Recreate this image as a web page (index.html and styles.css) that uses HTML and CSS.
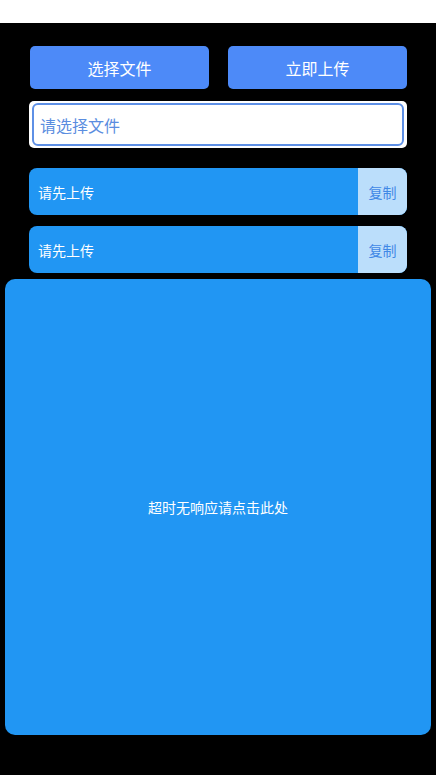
FILE: index.html
```html
<!DOCTYPE html>
<html lang="zh-CN">
<head>
<meta charset="utf-8">
<title>上传</title>
<link rel="stylesheet" href="styles.css">
</head>
<body>
<div class="topbar"></div>
<main class="page">
  <div class="actions">
    <button class="btn">选择文件</button>
    <button class="btn">立即上传</button>
  </div>
  <div class="field">
    <div class="field-inner">请选择文件</div>
  </div>
  <div class="result first">
    <span class="result-text">请先上传</span>
    <span class="copy">复制</span>
  </div>
  <div class="result second">
    <span class="result-text">请先上传</span>
    <span class="copy">复制</span>
  </div>
  <div class="panel">超时无响应请点击此处</div>
</main>
</body>
</html>
```

FILE: styles.css
```css
html, body {
  margin: 0;
  padding: 0;
  background: #000;
  font-family: "Noto Sans CJK SC", "Noto Sans", sans-serif;
}
.topbar {
  height: 23px;
  background: #fff;
}
.page {
  display: flex;
  flex-direction: column;
  padding-bottom: 40px;
}
.actions {
  display: grid;
  grid-template-columns: 1fr 1fr;
  gap: 19px;
  margin: 23px 29px 0 30px;
}
.btn {
  height: 43px;
  border: none;
  border-radius: 5px;
  background: #4d8af8;
  color: #fff;
  font-family: inherit;
  font-size: 16px;
  padding: 0;
}
.field {
  margin: 12px 29px 0 29px;
  height: 47px;
  box-sizing: border-box;
  background: #fff;
  border-radius: 5px;
  padding: 2px 3px;
}
.field-inner {
  height: 100%;
  box-sizing: border-box;
  border: 2px solid #5e90e6;
  border-radius: 6px;
  display: flex;
  align-items: center;
  padding-left: 6px;
  color: #5a8de0;
  font-size: 16px;
}
.result {
  margin: 0 29px;
  height: 47px;
  display: flex;
  border-radius: 8px;
  overflow: hidden;
  background: #2196f3;
}
.result.first { margin-top: 20px; }
.result.second { margin-top: 11px; }
.result-text {
  flex: 1;
  display: flex;
  align-items: center;
  padding-left: 9px;
  color: #fff;
  font-size: 14px;
}
.copy {
  width: 49px;
  display: flex;
  align-items: center;
  justify-content: center;
  background: #bbdefb;
  color: #3f88e6;
  font-size: 14px;
}
.panel {
  margin: 6px 5px 0 5px;
  height: 456px;
  border-radius: 10px;
  background: #2196f3;
  color: #fff;
  font-size: 14px;
  display: flex;
  align-items: center;
  justify-content: center;
}
```
